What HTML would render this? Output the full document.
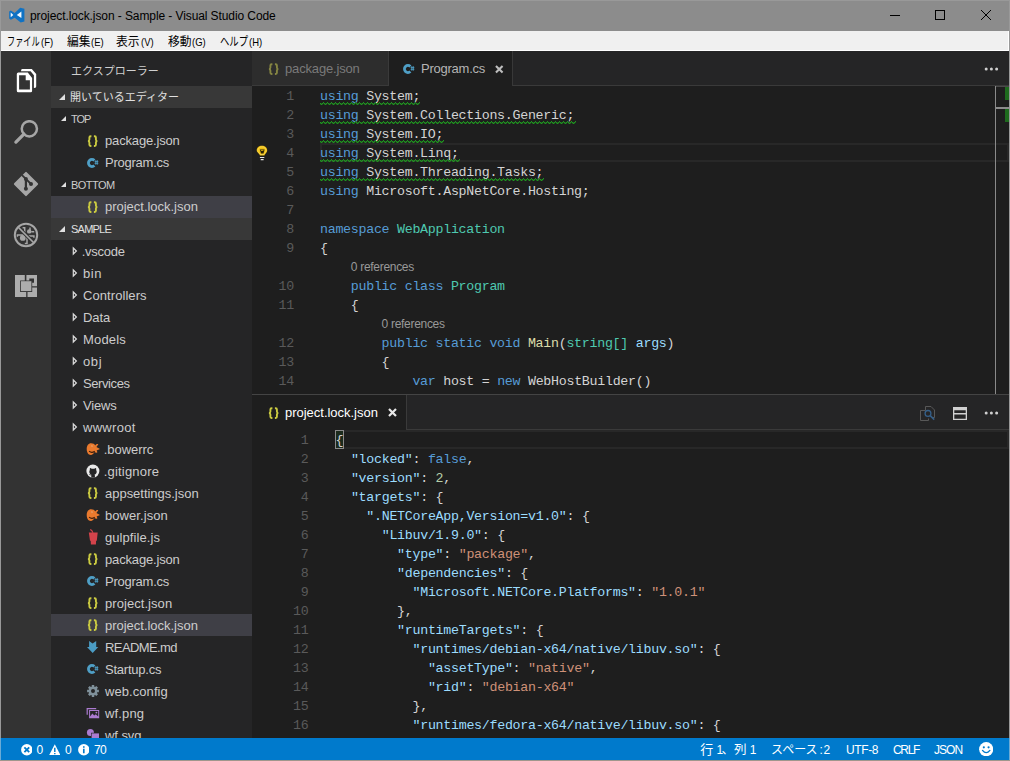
<!DOCTYPE html>
<html lang="ja"><head><meta charset="utf-8"><title>project.lock.json - Sample - Visual Studio Code</title>
<style>
html,body{margin:0;padding:0}
body{width:1010px;height:761px;overflow:hidden;background:#1e1e1e;font-family:"Liberation Sans",sans-serif;font-size:13px;color:#ccc;position:relative}
div,span,svg{box-sizing:border-box}
.abs{position:absolute}
span.jp{display:inline-block;white-space:nowrap;font-family:"Liberation Sans","Noto Sans CJK JP",sans-serif}
span.jp>span{display:inline-block;transform-origin:0 50%}
#titlebar{position:absolute;left:0;top:0;width:1010px;height:31px;background:#8c8c8c}
#titlebar .ttl{position:absolute;left:30px;top:1px;height:31px;line-height:31px;font-size:12px;color:#000;white-space:nowrap;letter-spacing:0}
#menubar{position:absolute;left:0;top:31px;width:1010px;height:20px;background:#f0f0f0;color:#000;font-size:12px;border-bottom:1px solid #fff;border-right:2px solid #fff}
#menubar .mi{position:absolute;top:1px;height:20px;line-height:20px;white-space:nowrap}
#menubar .mi .la{display:inline-block;font-size:11px;transform:scaleX(.86);transform-origin:0 50%;margin-left:1px}
#activity{position:absolute;left:1px;top:51px;width:50px;height:687px;background:#333}
#sidebar{position:absolute;left:51px;top:51px;width:201px;height:687px;background:#252526;overflow:hidden}
#sidebar .hdr{position:absolute;left:20px;top:2px;height:35px;line-height:37px;color:#ccc;font-size:11px}
.row{position:absolute;left:0;width:201px;height:22px;line-height:22px;white-space:nowrap;font-size:13px;color:#ccc}
.row.sec{background:#383838;font-size:11px;color:#e0e0e0}
.row.grp{font-size:11px;color:#ccc}
.row.sel{background:#3f3f46}
.row .t{position:absolute;left:54px;top:0}
.row .ft{position:absolute;left:32px;top:0}
.row .gt{position:absolute;left:20px;top:0}
.row.tr .t,.row.tr .ft{top:1px}
.row svg.ic{position:absolute;left:34px;top:3px}
.tw{position:absolute;width:0;height:0;border-style:solid}
.tw.open{left:8px;top:8px;border-width:0 0 6px 6px;border-color:transparent transparent #e0e0e0 transparent}
.grp .tw.open{left:10px;top:8px;border-width:0 0 5.5px 5.5px}
.tw.closed{left:24px;top:7px}
.edgrp{position:absolute;left:252px;width:757px;background:#1e1e1e;overflow:hidden}
.tabs{position:absolute;left:0;top:0;width:757px;height:35px;background:#252526}
.tab{position:absolute;top:0;height:35px;line-height:35px;font-size:13px;white-space:nowrap}
.tab .lbl{position:absolute;left:33px;top:0}
.tab svg.ic{position:absolute;left:14px;top:10px}
.code{position:absolute;left:0;margin-top:1px;width:757px;font-family:"Liberation Mono",monospace;font-size:13.3px;letter-spacing:-0.28px;color:#d4d4d4}
.ln{position:absolute;left:0;height:19px;line-height:19px;white-space:pre}
.num{position:absolute;height:19px;line-height:19px;color:#5a5a5a;text-align:right;white-space:pre}
.k{color:#569cd6}.ty{color:#4ec9b0}.fn{color:#dcdcaa}.v{color:#9cdcfe}.s{color:#ce9178}.n{color:#b5cea8}.p{color:#9cdcfe}
.lens{position:absolute;height:19px;line-height:19px;font-family:"Liberation Sans",sans-serif;font-size:12px;letter-spacing:0;color:#999;white-space:nowrap}
#status{position:absolute;left:0;top:738px;width:1010px;height:23px;background:#007acc;color:#fff;font-size:12px;line-height:24px}
#status .si{position:absolute;top:0;height:22px;white-space:nowrap}
.bd{position:absolute;background:#999}
</style></head>
<body>
<div id="titlebar"><svg class="abs" style="left:9px;top:7px" width="16" height="16" viewBox="0 0 16 16"><path fill="#0f72c4" d="M11.2 .7L15.4 1.8V14.5L11.7 15.4L5.7 10.7L1.8 12.7L.2 11.4V4.4L1.8 3.5L5.7 5.9Z"/><path fill="#f4faff" d="M12.4 4.6V11L7.8 7.9ZM1.7 5.5V10.3L4.3 7.9Z"/></svg><div class="ttl"><span style="letter-spacing:-0.09px">project.lock.json - Sample - Visual Studio Code</span></div><svg class="abs" style="left:880px;top:0" width="130" height="31" fill="none" stroke="#000" stroke-width="1"><path d="M10 15.5H20"/><rect x="55.5" y="10.5" width="9" height="9"/><path d="M101 10L111 20M111 10L101 20"/></svg></div>
<div id="menubar"><div class="mi" style="left:7px"><span class="jp" style="width:32.6px;font-size:12px;color:#000"><span style="transform:scaleX(.68)">ファイル</span></span><span class="la">(F)</span></div><div class="mi" style="left:66.5px"><span class="jp" style="width:23.6px;font-size:12px;color:#000"><span style="transform:scaleX(.98)">編集</span></span><span class="la">(E)</span></div><div class="mi" style="left:116.4px"><span class="jp" style="width:23.6px;font-size:12px;color:#000"><span style="transform:scaleX(.98)">表示</span></span><span class="la">(V)</span></div><div class="mi" style="left:167.7px"><span class="jp" style="width:23.6px;font-size:12px;color:#000"><span style="transform:scaleX(.98)">移動</span></span><span class="la">(G)</span></div><div class="mi" style="left:219.9px"><span class="jp" style="width:28px;font-size:12px;color:#000"><span style="transform:scaleX(.78)">ヘルプ</span></span><span class="la">(H)</span></div></div>
<div id="activity"><svg class="abs" style="left:15px;top:17px" width="22" height="26" viewBox="0 0 22 26" fill="#fff"><path fill-rule="evenodd" d="M2.3 4.6H11.8L16.1 9.9V22.7Q16.1 24.2 14.6 24.2H2.3Q.8 24.2 .8 22.7V6.1Q.8 4.6 2.3 4.6ZM3.1 7.2V21.4H13.9V12.3H9.7V7.2Z"/><path d="M6.2 .9H15.8L20.2 5.9V18.4Q20.2 20.1 17.9 20.1V7.2L14.6 3.3H5Q5 .9 6.2 .9Z"/></svg><svg class="abs" style="left:12px;top:69px" width="27" height="26" viewBox="0 0 27 26" fill="none" stroke="#a6a6a6"><circle cx="16.35" cy="8.8" r="7.6" stroke-width="2.5"/><path stroke-width="3.3" stroke-linecap="round" d="M10.9 14.1L2.9 22.1"/></svg><svg class="abs" style="left:12px;top:120px" width="26" height="26" viewBox="0 0 26 26"><path fill="#a6a6a6" stroke="#a6a6a6" stroke-width="2" stroke-linejoin="round" d="M13 1.9L24.1 13L13 24.1L1.9 13Z"/><g fill="none" stroke="#333"><path stroke-width="1.8" d="M9 4.1L18 13"/><path stroke-width="2.2" d="M12.9 8V17.7"/></g><circle cx="12.9" cy="8" r="2" fill="#333"/><circle cx="12.9" cy="17.7" r="2" fill="#333"/><circle cx="18" cy="12.9" r="2" fill="#333"/></svg><svg class="abs" style="left:12px;top:171px" width="26" height="26" viewBox="0 0 26 26" fill="none" stroke="#a6a6a6"><circle cx="9.8" cy="15.9" r="2.9" fill="#a6a6a6" stroke="none"/><circle cx="16.2" cy="9.4" r="2.2" fill="#a6a6a6" stroke="none"/><path stroke-width="1.5" d="M11.7 11.5V5.7H9.6M11 13H4.4V14.8M14 15V21.6H11.8M15 14H20.9V15.8M17 5.6V8.2M18.3 9.8H21.2"/><path stroke="#333" stroke-width="3.4" d="M5 5L21 21"/><path stroke-width="1.7" d="M5 5L21 21"/><circle cx="13" cy="13" r="11.2" stroke-width="2"/></svg><svg class="abs" style="left:13.8px;top:223.8px" width="22.5" height="22.5" viewBox="0 0 22.5 22.5"><rect width="22.5" height="22.4" fill="#adadad"/><path fill="#333" d="M9.8 0h1.6v5.6H9.8ZM17.2 11.2h5.3v1.3h-5.3ZM11.2 16.9h1.3v5.6h-1.3ZM14.3 3.5H19V7.7H14.3ZM5.1 5.4H17.2V16.9H5.1Z"/><rect x="5.9" y="6.2" width="10.5" height="9.9" fill="#adadad"/></svg></div>
<div id="sidebar"><div class="hdr"><span class="jp" style="width:88.5px;font-size:11px;color:#d0d0d0">エクスプローラー</span></div>
<div class="row sec" style="top:35px"><span class="tw open"></span><span class="gt" style="left:19px"><span class="jp" style="width:111px;font-size:11px">開いているエディター</span></span></div>
<div class="row grp" style="top:57px"><span class="tw open"></span><span class="gt"><span style="letter-spacing:-1.01px">TOP</span></span></div>
<div class="row " style="top:79px"><svg class="ic" width="16" height="16" viewBox="0 0 16 16" ><path fill="none" stroke="#cbcb41" stroke-width="1.9" d="M6.4 3.2H5.6Q4.4 3.2 4.4 4.4V6.6Q4.4 8.1 2.9 8.1Q4.4 8.1 4.4 9.6V11.8Q4.4 13 5.6 13H6.4M8.9 3.2H9.7Q10.9 3.2 10.9 4.4V6.6Q10.9 8.1 12.4 8.1Q10.9 8.1 10.9 9.6V11.8Q10.9 13 9.7 13H8.9"/></svg><span class="t"><span style="letter-spacing:-0.16px">package.json</span></span></div>
<div class="row " style="top:101px"><svg class="ic" width="16" height="16" viewBox="0 0 16 16" ><path fill="none" stroke="#4f9fc6" stroke-width="2.8" d="M9.4 5.5A3.5 3.5 0 1 0 9.4 10.5"/><path fill="none" stroke="#4f9fc6" stroke-width=".9" d="M9.6 6.6H13.3M9.6 8.3H13.3M10.8 5.2V9.7M12.3 5.2V9.7"/></svg><span class="t"><span style="letter-spacing:-0.24px">Program.cs</span></span></div>
<div class="row grp" style="top:123px"><span class="tw open"></span><span class="gt"><span style="letter-spacing:-0.53px">BOTTOM</span></span></div>
<div class="row sel" style="top:145px"><svg class="ic" width="16" height="16" viewBox="0 0 16 16" ><path fill="none" stroke="#cbcb41" stroke-width="1.9" d="M6.4 3.2H5.6Q4.4 3.2 4.4 4.4V6.6Q4.4 8.1 2.9 8.1Q4.4 8.1 4.4 9.6V11.8Q4.4 13 5.6 13H6.4M8.9 3.2H9.7Q10.9 3.2 10.9 4.4V6.6Q10.9 8.1 12.4 8.1Q10.9 8.1 10.9 9.6V11.8Q10.9 13 9.7 13H8.9"/></svg><span class="t"><span style="letter-spacing:-0.02px">project.lock.json</span></span></div>
<div class="row sec" style="top:167px"><span class="tw open"></span><span class="gt"><span style="letter-spacing:-0.77px">SAMPLE</span></span></div>
<div class="row tr" style="top:189px"><svg class="abs" style="left:21px;top:6px" width="7" height="10" viewBox="0 0 7 10"><path fill="none" stroke="#dcdcdc" stroke-width="1.2" stroke-linejoin="miter" d="M1.3 2L4.4 5L1.3 8Z"/></svg><span class="ft"><span style="margin-left:-1.3px;letter-spacing:-0.27px">.vscode</span></span></div>
<div class="row tr" style="top:211px"><svg class="abs" style="left:21px;top:6px" width="7" height="10" viewBox="0 0 7 10"><path fill="none" stroke="#dcdcdc" stroke-width="1.2" stroke-linejoin="miter" d="M1.3 2L4.4 5L1.3 8Z"/></svg><span class="ft"><span style="letter-spacing:0.55px">bin</span></span></div>
<div class="row tr" style="top:233px"><svg class="abs" style="left:21px;top:6px" width="7" height="10" viewBox="0 0 7 10"><path fill="none" stroke="#dcdcdc" stroke-width="1.2" stroke-linejoin="miter" d="M1.3 2L4.4 5L1.3 8Z"/></svg><span class="ft"><span style="letter-spacing:0.07px">Controllers</span></span></div>
<div class="row tr" style="top:255px"><svg class="abs" style="left:21px;top:6px" width="7" height="10" viewBox="0 0 7 10"><path fill="none" stroke="#dcdcdc" stroke-width="1.2" stroke-linejoin="miter" d="M1.3 2L4.4 5L1.3 8Z"/></svg><span class="ft"><span style="letter-spacing:-0.09px">Data</span></span></div>
<div class="row tr" style="top:277px"><svg class="abs" style="left:21px;top:6px" width="7" height="10" viewBox="0 0 7 10"><path fill="none" stroke="#dcdcdc" stroke-width="1.2" stroke-linejoin="miter" d="M1.3 2L4.4 5L1.3 8Z"/></svg><span class="ft"><span style="letter-spacing:0.16px">Models</span></span></div>
<div class="row tr" style="top:299px"><svg class="abs" style="left:21px;top:6px" width="7" height="10" viewBox="0 0 7 10"><path fill="none" stroke="#dcdcdc" stroke-width="1.2" stroke-linejoin="miter" d="M1.3 2L4.4 5L1.3 8Z"/></svg><span class="ft"><span style="letter-spacing:0.61px">obj</span></span></div>
<div class="row tr" style="top:321px"><svg class="abs" style="left:21px;top:6px" width="7" height="10" viewBox="0 0 7 10"><path fill="none" stroke="#dcdcdc" stroke-width="1.2" stroke-linejoin="miter" d="M1.3 2L4.4 5L1.3 8Z"/></svg><span class="ft"><span style="letter-spacing:-0.41px">Services</span></span></div>
<div class="row tr" style="top:343px"><svg class="abs" style="left:21px;top:6px" width="7" height="10" viewBox="0 0 7 10"><path fill="none" stroke="#dcdcdc" stroke-width="1.2" stroke-linejoin="miter" d="M1.3 2L4.4 5L1.3 8Z"/></svg><span class="ft"><span style="letter-spacing:-0.15px">Views</span></span></div>
<div class="row tr" style="top:365px"><svg class="abs" style="left:21px;top:6px" width="7" height="10" viewBox="0 0 7 10"><path fill="none" stroke="#dcdcdc" stroke-width="1.2" stroke-linejoin="miter" d="M1.3 2L4.4 5L1.3 8Z"/></svg><span class="ft"><span style="letter-spacing:0.29px">wwwroot</span></span></div>
<div class="row tr" style="top:387px"><svg class="ic" width="16" height="16" viewBox="0 0 16 16" ><path fill="#ea7a2e" d="M6 2.3C8.2 2.3 9.6 3.2 10.2 4.4C11 3.4 12.4 2.9 13.3 3.2C12.6 4.2 12 5.2 11.4 5.9L15 8L11.6 9.6C12.2 10.2 12.4 11 12.2 11.8C11 11.9 9.9 11.5 9.3 11C8.8 12.8 7.4 13.9 5.8 13.9C3.2 13.9 1.7 11.2 1.7 8C1.7 4.6 3.4 2.3 6 2.3Z"/><path fill="none" stroke="#3c1c08" stroke-width="1.1" d="M4.1 10.1Q6.6 12.5 9.7 10.3"/><circle cx="6.9" cy="5.1" r=".9" fill="#f8b078"/><circle cx="6.9" cy="5.1" r=".4" fill="#7a3a14"/></svg><span class="t"><span style="margin-left:-1.3px;letter-spacing:-0.04px">.bowerrc</span></span></div>
<div class="row tr" style="top:409px"><svg class="ic" width="16" height="16" viewBox="0 0 16 16" ><circle cx="7.9" cy="8.1" r="6.5" fill="#e9e9e9"/><path fill="#252526" d="M6.3 14.4V12.2C5 12.5 4.4 11.6 4.1 11C4.8 11 5.2 11.6 5.5 11.8C5.9 11.9 6.2 11.8 6.4 11.6C5 11.2 4.3 10.2 4.3 8.7C4.3 8 4.5 7.4 4.9 7C4.7 6.5 4.7 5.7 5 5.1C5.7 5.1 6.3 5.5 6.7 5.8C7.4 5.6 8.6 5.6 9.3 5.8C9.7 5.5 10.3 5.1 11 5.1C11.3 5.7 11.3 6.5 11.1 7C11.5 7.4 11.7 8 11.7 8.7C11.7 10.2 11 11.2 9.6 11.6C9.8 11.9 9.9 12.3 9.9 12.7V14.4Z"/></svg><span class="t"><span style="margin-left:-1.3px;letter-spacing:0.19px">.gitignore</span></span></div>
<div class="row tr" style="top:431px"><svg class="ic" width="16" height="16" viewBox="0 0 16 16" ><path fill="none" stroke="#cbcb41" stroke-width="1.9" d="M6.4 3.2H5.6Q4.4 3.2 4.4 4.4V6.6Q4.4 8.1 2.9 8.1Q4.4 8.1 4.4 9.6V11.8Q4.4 13 5.6 13H6.4M8.9 3.2H9.7Q10.9 3.2 10.9 4.4V6.6Q10.9 8.1 12.4 8.1Q10.9 8.1 10.9 9.6V11.8Q10.9 13 9.7 13H8.9"/></svg><span class="t"><span style="letter-spacing:-0.02px">appsettings.json</span></span></div>
<div class="row tr" style="top:453px"><svg class="ic" width="16" height="16" viewBox="0 0 16 16" ><path fill="#ea7a2e" d="M6 2.3C8.2 2.3 9.6 3.2 10.2 4.4C11 3.4 12.4 2.9 13.3 3.2C12.6 4.2 12 5.2 11.4 5.9L15 8L11.6 9.6C12.2 10.2 12.4 11 12.2 11.8C11 11.9 9.9 11.5 9.3 11C8.8 12.8 7.4 13.9 5.8 13.9C3.2 13.9 1.7 11.2 1.7 8C1.7 4.6 3.4 2.3 6 2.3Z"/><path fill="none" stroke="#3c1c08" stroke-width="1.1" d="M4.1 10.1Q6.6 12.5 9.7 10.3"/><circle cx="6.9" cy="5.1" r=".9" fill="#f8b078"/><circle cx="6.9" cy="5.1" r=".4" fill="#7a3a14"/></svg><span class="t"><span style="letter-spacing:0.07px">bower.json</span></span></div>
<div class="row tr" style="top:475px"><svg class="ic" width="16" height="16" viewBox="0 0 16 16" ><path fill="#d3434b" d="M3.8 3.5H12.7L11.8 11.8H11.1L10.9 15.6H5.9L5.7 11.8H5Z"/><path fill="none" stroke="#d3434b" stroke-width="1.1" d="M8 3.8L6.7 1.5L5.2 .5"/></svg><span class="t"><span style="letter-spacing:0.07px">gulpfile.js</span></span></div>
<div class="row tr" style="top:497px"><svg class="ic" width="16" height="16" viewBox="0 0 16 16" ><path fill="none" stroke="#cbcb41" stroke-width="1.9" d="M6.4 3.2H5.6Q4.4 3.2 4.4 4.4V6.6Q4.4 8.1 2.9 8.1Q4.4 8.1 4.4 9.6V11.8Q4.4 13 5.6 13H6.4M8.9 3.2H9.7Q10.9 3.2 10.9 4.4V6.6Q10.9 8.1 12.4 8.1Q10.9 8.1 10.9 9.6V11.8Q10.9 13 9.7 13H8.9"/></svg><span class="t"><span style="letter-spacing:-0.16px">package.json</span></span></div>
<div class="row tr" style="top:519px"><svg class="ic" width="16" height="16" viewBox="0 0 16 16" ><path fill="none" stroke="#4f9fc6" stroke-width="2.8" d="M9.4 5.5A3.5 3.5 0 1 0 9.4 10.5"/><path fill="none" stroke="#4f9fc6" stroke-width=".9" d="M9.6 6.6H13.3M9.6 8.3H13.3M10.8 5.2V9.7M12.3 5.2V9.7"/></svg><span class="t"><span style="letter-spacing:-0.24px">Program.cs</span></span></div>
<div class="row tr" style="top:541px"><svg class="ic" width="16" height="16" viewBox="0 0 16 16" ><path fill="none" stroke="#cbcb41" stroke-width="1.9" d="M6.4 3.2H5.6Q4.4 3.2 4.4 4.4V6.6Q4.4 8.1 2.9 8.1Q4.4 8.1 4.4 9.6V11.8Q4.4 13 5.6 13H6.4M8.9 3.2H9.7Q10.9 3.2 10.9 4.4V6.6Q10.9 8.1 12.4 8.1Q10.9 8.1 10.9 9.6V11.8Q10.9 13 9.7 13H8.9"/></svg><span class="t"><span style="letter-spacing:0.06px">project.json</span></span></div>
<div class="row tr sel" style="top:563px"><svg class="ic" width="16" height="16" viewBox="0 0 16 16" ><path fill="none" stroke="#cbcb41" stroke-width="1.9" d="M6.4 3.2H5.6Q4.4 3.2 4.4 4.4V6.6Q4.4 8.1 2.9 8.1Q4.4 8.1 4.4 9.6V11.8Q4.4 13 5.6 13H6.4M8.9 3.2H9.7Q10.9 3.2 10.9 4.4V6.6Q10.9 8.1 12.4 8.1Q10.9 8.1 10.9 9.6V11.8Q10.9 13 9.7 13H8.9"/></svg><span class="t"><span style="letter-spacing:-0.02px">project.lock.json</span></span></div>
<div class="row tr" style="top:585px"><svg class="ic" width="16" height="16" viewBox="0 0 16 16" ><path fill="#4b9cc4" d="M4.1 2L7.6 4.4L11.2 2V8H13.3L7.7 13.9L2 8H4.1Z"/></svg><span class="t"><span style="letter-spacing:-0.59px">README.md</span></span></div>
<div class="row tr" style="top:607px"><svg class="ic" width="16" height="16" viewBox="0 0 16 16" ><path fill="none" stroke="#4f9fc6" stroke-width="2.8" d="M9.4 5.5A3.5 3.5 0 1 0 9.4 10.5"/><path fill="none" stroke="#4f9fc6" stroke-width=".9" d="M9.6 6.6H13.3M9.6 8.3H13.3M10.8 5.2V9.7M12.3 5.2V9.7"/></svg><span class="t"><span style="letter-spacing:-0.23px">Startup.cs</span></span></div>
<div class="row tr" style="top:629px"><svg class="ic" width="16" height="16" viewBox="0 0 16 16" ><path fill="#7f909a" fill-rule="evenodd" d="M13.9 6.8L13.9 9.2L12.2 9.3L11.9 10.1L13.0 11.3L11.3 13.0L10.1 11.9L9.3 12.2L9.2 13.9L6.8 13.9L6.7 12.2L5.9 11.9L4.7 13.0L3.0 11.3L4.1 10.1L3.8 9.3L2.1 9.2L2.1 6.8L3.8 6.7L4.1 5.9L3.0 4.7L4.7 3.0L5.9 4.1L6.7 3.8L6.8 2.1L9.2 2.1L9.3 3.8L10.1 4.1L11.3 3.0L13.0 4.7L11.9 5.9L12.2 6.7ZM10 8A2 2 0 1 0 6 8A2 2 0 1 0 10 8Z"/></svg><span class="t"><span style="letter-spacing:0.07px">web.config</span></span></div>
<div class="row tr" style="top:651px"><svg class="ic" width="16" height="16" viewBox="0 0 16 16" ><path fill="none" stroke="#ab7bd0" stroke-width="1.2" d="M2.2 9.7V3.6H11.2"/><path fill="#ab7bd0" fill-rule="evenodd" d="M4.1 5H14.2V13.3H4.1ZM5.1 6V11.4L7.4 8.6L9.2 10.6L10.8 9.2L13.2 11.6V6Z"/><circle cx="11.4" cy="7.6" r=".9" fill="#ab7bd0"/></svg><span class="t"><span style="letter-spacing:0.15px">wf.png</span></span></div>
<div class="row tr" style="top:673px"><svg class="ic" width="16" height="16" viewBox="0 0 16 16" ><circle cx="5.4" cy="5.4" r="3.5" fill="#ab7bd0"/><rect x="6" y="5.8" width="8.5" height="8.7" fill="#252526"/><rect x="6.6" y="6.4" width="7.4" height="7.6" fill="#ab7bd0"/></svg><span class="t"><span style="letter-spacing:-0.06px">wf.svg</span></span></div></div>
<div class="edgrp" style="top:51px;height:343px"><div class="tabs"><div class="tab" style="left:0;width:137px;background:#2d2d2d;color:#7a7a7a;height:35px;border-right:1px solid #3a3a3a;border-bottom:1px solid #3a3a3a"><svg class="ic" width="16" height="16" viewBox="0 0 16 16" ><path fill="none" stroke="#858542" stroke-width="1.9" d="M6.4 3.2H5.6Q4.4 3.2 4.4 4.4V6.6Q4.4 8.1 2.9 8.1Q4.4 8.1 4.4 9.6V11.8Q4.4 13 5.6 13H6.4M8.9 3.2H9.7Q10.9 3.2 10.9 4.4V6.6Q10.9 8.1 12.4 8.1Q10.9 8.1 10.9 9.6V11.8Q10.9 13 9.7 13H8.9"/></svg><span class="lbl"><span style="letter-spacing:-0.16px">package.json</span></span></div><div class="tab" style="left:137px;width:124px;background:#1e1e1e;color:#b4b4b4;border-right:1px solid #383838"><svg class="ic" style="left:12px" width="16" height="16" viewBox="0 0 16 16" ><path fill="none" stroke="#4f9fc6" stroke-width="2.8" d="M9.4 5.5A3.5 3.5 0 1 0 9.4 10.5"/><path fill="none" stroke="#4f9fc6" stroke-width=".9" d="M9.6 6.6H13.3M9.6 8.3H13.3M10.8 5.2V9.7M12.3 5.2V9.7"/></svg><span class="lbl" style="left:32px"><span style="letter-spacing:-0.24px">Program.cs</span></span><svg class="abs" style="left:106px;top:14px" width="8.5" height="8.5" viewBox="0 0 9 9"><path fill="none" stroke="#bdbdbd" stroke-width="2.2" d="M1 1L8 8M8 1L1 8"/></svg></div><svg class="abs" style="left:732px;top:16px" width="16" height="4" viewBox="0 0 16 4"><circle cx="2.2" cy="2" r="1.5" fill="#d0d0d0"/><circle cx="7.4" cy="2" r="1.5" fill="#d0d0d0"/><circle cx="12.6" cy="2" r="1.5" fill="#d0d0d0"/></svg><div class="abs" style="left:261px;top:34px;width:496px;height:1px;background:#3a3a3a"></div></div><div class="abs" style="left:68px;top:92px;width:689px;height:19px;border:2px solid #282828"></div><svg class="abs" style="left:4px;top:94px" width="12" height="16" viewBox="0 0 12 16"><path fill="#efbf10" d="M5.95 .7C9 .7 11.2 2.8 11.2 5.3C11.2 7 10.2 8 9.3 9C8.8 9.6 8.5 10 8.5 10.6H3.9C3.9 10 3.6 9.6 3.1 9C2.2 8 .7 7 .7 5.3C.7 2.8 2.9 .7 5.95 .7Z"/><path fill="none" stroke="#f6dc6a" stroke-width=".7" d="M5.95 1.9C8.4 1.9 10 3.5 10 5.3C10 6.6 9.3 7.4 8.5 8.3L7.9 9.4H4L3.4 8.3C2.6 7.4 1.9 6.6 1.9 5.3C1.9 3.5 3.5 1.9 5.95 1.9Z"/><path fill="#2a2208" d="M3.9 4.5H8.6L7.5 8.6H5Z"/><path fill="#e2b414" d="M5 5.2H7.4V6H5Z"/><path fill="#e6e6e6" d="M3.9 11.9H8.3V13H3.9ZM4.7 14H7.6V15.2H4.7Z"/></svg><div class="code" style="top:35px;height:308px"><div class="num" style="left:0;width:42px;top:0px">1</div>
<div class="ln" style="left:68px;top:0px"><span class="k">using</span> System;</div>
<div class="num" style="left:0;width:42px;top:19px">2</div>
<div class="ln" style="left:68px;top:19px"><span class="k">using</span> System.Collections.Generic;</div>
<div class="num" style="left:0;width:42px;top:38px">3</div>
<div class="ln" style="left:68px;top:38px"><span class="k">using</span> System.IO;</div>
<div class="num" style="left:0;width:42px;top:57px">4</div>
<div class="ln" style="left:68px;top:57px"><span class="k">using</span> System.Linq;</div>
<div class="num" style="left:0;width:42px;top:76px">5</div>
<div class="ln" style="left:68px;top:76px"><span class="k">using</span> System.Threading.Tasks;</div>
<div class="num" style="left:0;width:42px;top:95px">6</div>
<div class="ln" style="left:68px;top:95px"><span class="k">using</span> Microsoft.AspNetCore.Hosting;</div>
<div class="num" style="left:0;width:42px;top:114px">7</div>
<div class="ln" style="left:68px;top:114px"></div>
<div class="num" style="left:0;width:42px;top:133px">8</div>
<div class="ln" style="left:68px;top:133px"><span class="k">namespace</span> <span class="ty">WebApplication</span></div>
<div class="num" style="left:0;width:42px;top:152px">9</div>
<div class="ln" style="left:68px;top:152px">{</div>
<div class="lens" style="left:98.8px;top:171px"><span style="letter-spacing:-0.30px">0 references</span></div>
<div class="num" style="left:0;width:42px;top:190px">10</div>
<div class="ln" style="left:68px;top:190px">    <span class="k">public class</span> <span class="ty">Program</span></div>
<div class="num" style="left:0;width:42px;top:209px">11</div>
<div class="ln" style="left:68px;top:209px">    {</div>
<div class="lens" style="left:129.6px;top:228px"><span style="letter-spacing:-0.30px">0 references</span></div>
<div class="num" style="left:0;width:42px;top:247px">12</div>
<div class="ln" style="left:68px;top:247px">        <span class="k">public static void</span> <span class="fn">Main</span>(<span class="ty">string[]</span> <span class="v">args</span>)</div>
<div class="num" style="left:0;width:42px;top:266px">13</div>
<div class="ln" style="left:68px;top:266px">        {</div>
<div class="num" style="left:0;width:42px;top:285px">14</div>
<div class="ln" style="left:68px;top:285px">            <span class="k">var</span> host = <span class="k">new</span> WebHostBuilder()</div>
<svg class="abs" style="left:0;top:0" width="757" height="308" shape-rendering="crispEdges"><defs><pattern id="sq" width="4" height="3" patternUnits="userSpaceOnUse"><path fill="#1f961f" d="M0 1h1v1h-1zM1 2h1v1h-1zM2 1h1v1h-1zM3 0h1v1h-1z"/><path fill="#1f961f" fill-opacity=".45" d="M0 2h1v1h-1zM1 1h1v1h-1zM2 2h1v1h-1zM3 1h1v1h-1z"/></pattern></defs><rect transform="translate(68 15)" width="100" height="3" fill="url(#sq)"/><rect transform="translate(68 34)" width="256" height="3" fill="url(#sq)"/><rect transform="translate(68 53)" width="124" height="3" fill="url(#sq)"/><rect transform="translate(68 72)" width="140" height="3" fill="url(#sq)"/><rect transform="translate(68 91)" width="224" height="3" fill="url(#sq)"/></svg></div><div class="abs" style="left:743px;top:35px;width:1px;height:308px;background:#8a8a8a"></div><div class="abs" style="left:744px;top:35px;width:13px;height:1px;background:#4a4a4a"></div><div class="abs" style="left:753px;top:36px;width:4px;height:13px;background:#1e6b1e"></div><div class="abs" style="left:753px;top:58px;width:4px;height:13px;background:#1e6b1e"></div><div class="abs" style="left:744px;top:56px;width:13px;height:2px;background:#8c8c8c"></div></div>
<div class="edgrp" style="top:394px;height:344px"><div class="tabs" style="top:1px;height:35px"><div class="tab" style="left:0;width:155px;background:#1e1e1e;color:#fff;border-right:1px solid #3a3a3a"><svg class="ic" width="16" height="16" viewBox="0 0 16 16" ><path fill="none" stroke="#cbcb41" stroke-width="1.9" d="M6.4 3.2H5.6Q4.4 3.2 4.4 4.4V6.6Q4.4 8.1 2.9 8.1Q4.4 8.1 4.4 9.6V11.8Q4.4 13 5.6 13H6.4M8.9 3.2H9.7Q10.9 3.2 10.9 4.4V6.6Q10.9 8.1 12.4 8.1Q10.9 8.1 10.9 9.6V11.8Q10.9 13 9.7 13H8.9"/></svg><span class="lbl"><span style="letter-spacing:-0.02px">project.lock.json</span></span><svg class="abs" style="left:136px;top:13px" width="9" height="9" viewBox="0 0 9 9"><path fill="none" stroke="#e8e8e8" stroke-width="2.2" d="M1 1L8 8M8 1L1 8"/></svg></div><svg class="abs" style="left:668px;top:11px" width="16" height="15" viewBox="0 0 16 15" fill="none"><path stroke="#585858" stroke-width="1" d="M5.5 4.5V.5H11L14.5 4V11.5H12M.5 4.5H5.5M.5 4.5V14.5H8.5V12.5"/><circle cx="8" cy="7.4" r="2.9" stroke="#35608a" stroke-width="1.3"/><path stroke="#35608a" stroke-width="1.5" d="M10.2 9.6L14.2 13.6"/></svg><svg class="abs" style="left:701px;top:12px" width="14" height="13" viewBox="0 0 14 13"><path fill="#d0d0d0" fill-rule="evenodd" d="M0 0H14V13H0ZM1.3 3.2V5.9H12.7V3.2ZM1.3 7.4V11.7H12.7V7.4Z"/></svg><svg class="abs" style="left:732px;top:16px" width="16" height="4" viewBox="0 0 16 4"><circle cx="2.2" cy="2" r="1.5" fill="#d0d0d0"/><circle cx="7.4" cy="2" r="1.5" fill="#d0d0d0"/><circle cx="12.6" cy="2" r="1.5" fill="#d0d0d0"/></svg><div class="abs" style="left:154px;top:34px;width:603px;height:1px;background:#3a3a3a"></div></div><div class="abs" style="left:0;top:0;width:757px;height:1px;background:#444"></div><div class="abs" style="left:84px;top:36px;width:673px;height:19px;border:2px solid #282828"></div><div class="abs" style="left:83px;top:36px;width:8.5px;height:19px;border:1px solid #8a8a8a;background:#1c2a1c"></div><div class="code" style="top:36px;height:308px"><div class="num" style="left:0;width:56.5px;top:0px">1</div>
<div class="ln" style="left:83.5px;top:0px">{</div>
<div class="num" style="left:0;width:56.5px;top:19px">2</div>
<div class="ln" style="left:83.5px;top:19px">  <span class="p">"locked"</span>: <span class="k">false</span>,</div>
<div class="num" style="left:0;width:56.5px;top:38px">3</div>
<div class="ln" style="left:83.5px;top:38px">  <span class="p">"version"</span>: <span class="n">2</span>,</div>
<div class="num" style="left:0;width:56.5px;top:57px">4</div>
<div class="ln" style="left:83.5px;top:57px">  <span class="p">"targets"</span>: {</div>
<div class="num" style="left:0;width:56.5px;top:76px">5</div>
<div class="ln" style="left:83.5px;top:76px">    <span class="p">".NETCoreApp,Version=v1.0"</span>: {</div>
<div class="num" style="left:0;width:56.5px;top:95px">6</div>
<div class="ln" style="left:83.5px;top:95px">      <span class="p">"Libuv/1.9.0"</span>: {</div>
<div class="num" style="left:0;width:56.5px;top:114px">7</div>
<div class="ln" style="left:83.5px;top:114px">        <span class="p">"type"</span>: <span class="s">"package"</span>,</div>
<div class="num" style="left:0;width:56.5px;top:133px">8</div>
<div class="ln" style="left:83.5px;top:133px">        <span class="p">"dependencies"</span>: {</div>
<div class="num" style="left:0;width:56.5px;top:152px">9</div>
<div class="ln" style="left:83.5px;top:152px">          <span class="p">"Microsoft.NETCore.Platforms"</span>: <span class="s">"1.0.1"</span></div>
<div class="num" style="left:0;width:56.5px;top:171px">10</div>
<div class="ln" style="left:83.5px;top:171px">        },</div>
<div class="num" style="left:0;width:56.5px;top:190px">11</div>
<div class="ln" style="left:83.5px;top:190px">        <span class="p">"runtimeTargets"</span>: {</div>
<div class="num" style="left:0;width:56.5px;top:209px">12</div>
<div class="ln" style="left:83.5px;top:209px">          <span class="p">"runtimes/debian-x64/native/libuv.so"</span>: {</div>
<div class="num" style="left:0;width:56.5px;top:228px">13</div>
<div class="ln" style="left:83.5px;top:228px">            <span class="p">"assetType"</span>: <span class="s">"native"</span>,</div>
<div class="num" style="left:0;width:56.5px;top:247px">14</div>
<div class="ln" style="left:83.5px;top:247px">            <span class="p">"rid"</span>: <span class="s">"debian-x64"</span></div>
<div class="num" style="left:0;width:56.5px;top:266px">15</div>
<div class="ln" style="left:83.5px;top:266px">          },</div>
<div class="num" style="left:0;width:56.5px;top:285px">16</div>
<div class="ln" style="left:83.5px;top:285px">          <span class="p">"runtimes/fedora-x64/native/libuv.so"</span>: {</div></div></div>
<div id="status"><svg class="abs" style="left:20.8px;top:6px" width="11.6" height="11.6" viewBox="0 0 12 12"><circle cx="6" cy="6" r="5.9" fill="#fff"/><path stroke="#007acc" stroke-width="1.9" d="M3.5 3.5L8.5 8.5M8.5 3.5L3.5 8.5"/></svg><div class="si" style="left:36.6px">0</div><svg class="abs" style="left:48.8px;top:5.6px" width="11.6" height="11.6" viewBox="0 0 12 12"><path fill="#fff" d="M6 .2L11.9 11.6H.1Z"/><path stroke="#007acc" stroke-width="1.5" d="M6 4V8.2M6 9.2V10.6"/></svg><div class="si" style="left:65px">0</div><svg class="abs" style="left:77.8px;top:6px" width="11.6" height="11.6" viewBox="0 0 12 12"><circle cx="6" cy="6" r="5.9" fill="#fff"/><path stroke="#007acc" stroke-width="1.7" d="M6 5V9.6M6 2.4V4"/></svg><div class="si" style="left:94px;letter-spacing:-.6px">70</div><div class="si" style="left:700.3px"><span class="jp" style="width:13px;font-size:13px;color:#fff">行</span></div><div class="si" style="left:716.4px">1</div><div class="si" style="left:721.6px"><span class="jp" style="width:25px;font-size:12.5px;color:#fff">、列</span></div><div class="si" style="left:749.8px">1</div><div class="si" style="left:771px"><span class="jp" style="width:48.5px;font-size:12px;color:#fff">スペース</span></div><div class="si" style="left:819.6px">:</div><div class="si" style="left:823.6px">2</div><div class="si" style="left:846px"><span style="letter-spacing:-0.38px">UTF-8</span></div><div class="si" style="left:893px"><span style="letter-spacing:-1.34px">CRLF</span></div><div class="si" style="left:934px"><span style="letter-spacing:-0.95px">JSON</span></div><svg class="abs" style="left:978.8px;top:3.8px" width="14.4" height="14.4" viewBox="0 0 14 14"><circle cx="7" cy="7" r="6.9" fill="#fff"/><circle cx="4.7" cy="5.2" r="1.05" fill="#007acc"/><circle cx="9.3" cy="5.2" r="1.05" fill="#007acc"/><path fill="none" stroke="#007acc" stroke-width="1.3" stroke-linecap="round" d="M3.4 8.2Q7 12.6 10.6 8.2"/></svg></div>
<div class="bd" style="left:0;top:0;width:1010px;height:1px"></div><div class="bd" style="left:0;top:0;width:1px;height:738px"></div><div class="bd" style="left:1009px;top:0;width:1px;height:738px"></div><div class="bd" style="left:0;top:738px;width:1px;height:22px;background:#6aabd6"></div><div class="bd" style="left:1009px;top:738px;width:1px;height:22px;background:#6aabd6"></div><div class="bd" style="left:0;top:760px;width:1010px;height:1px;background:#a0968c"></div>
</body></html>
